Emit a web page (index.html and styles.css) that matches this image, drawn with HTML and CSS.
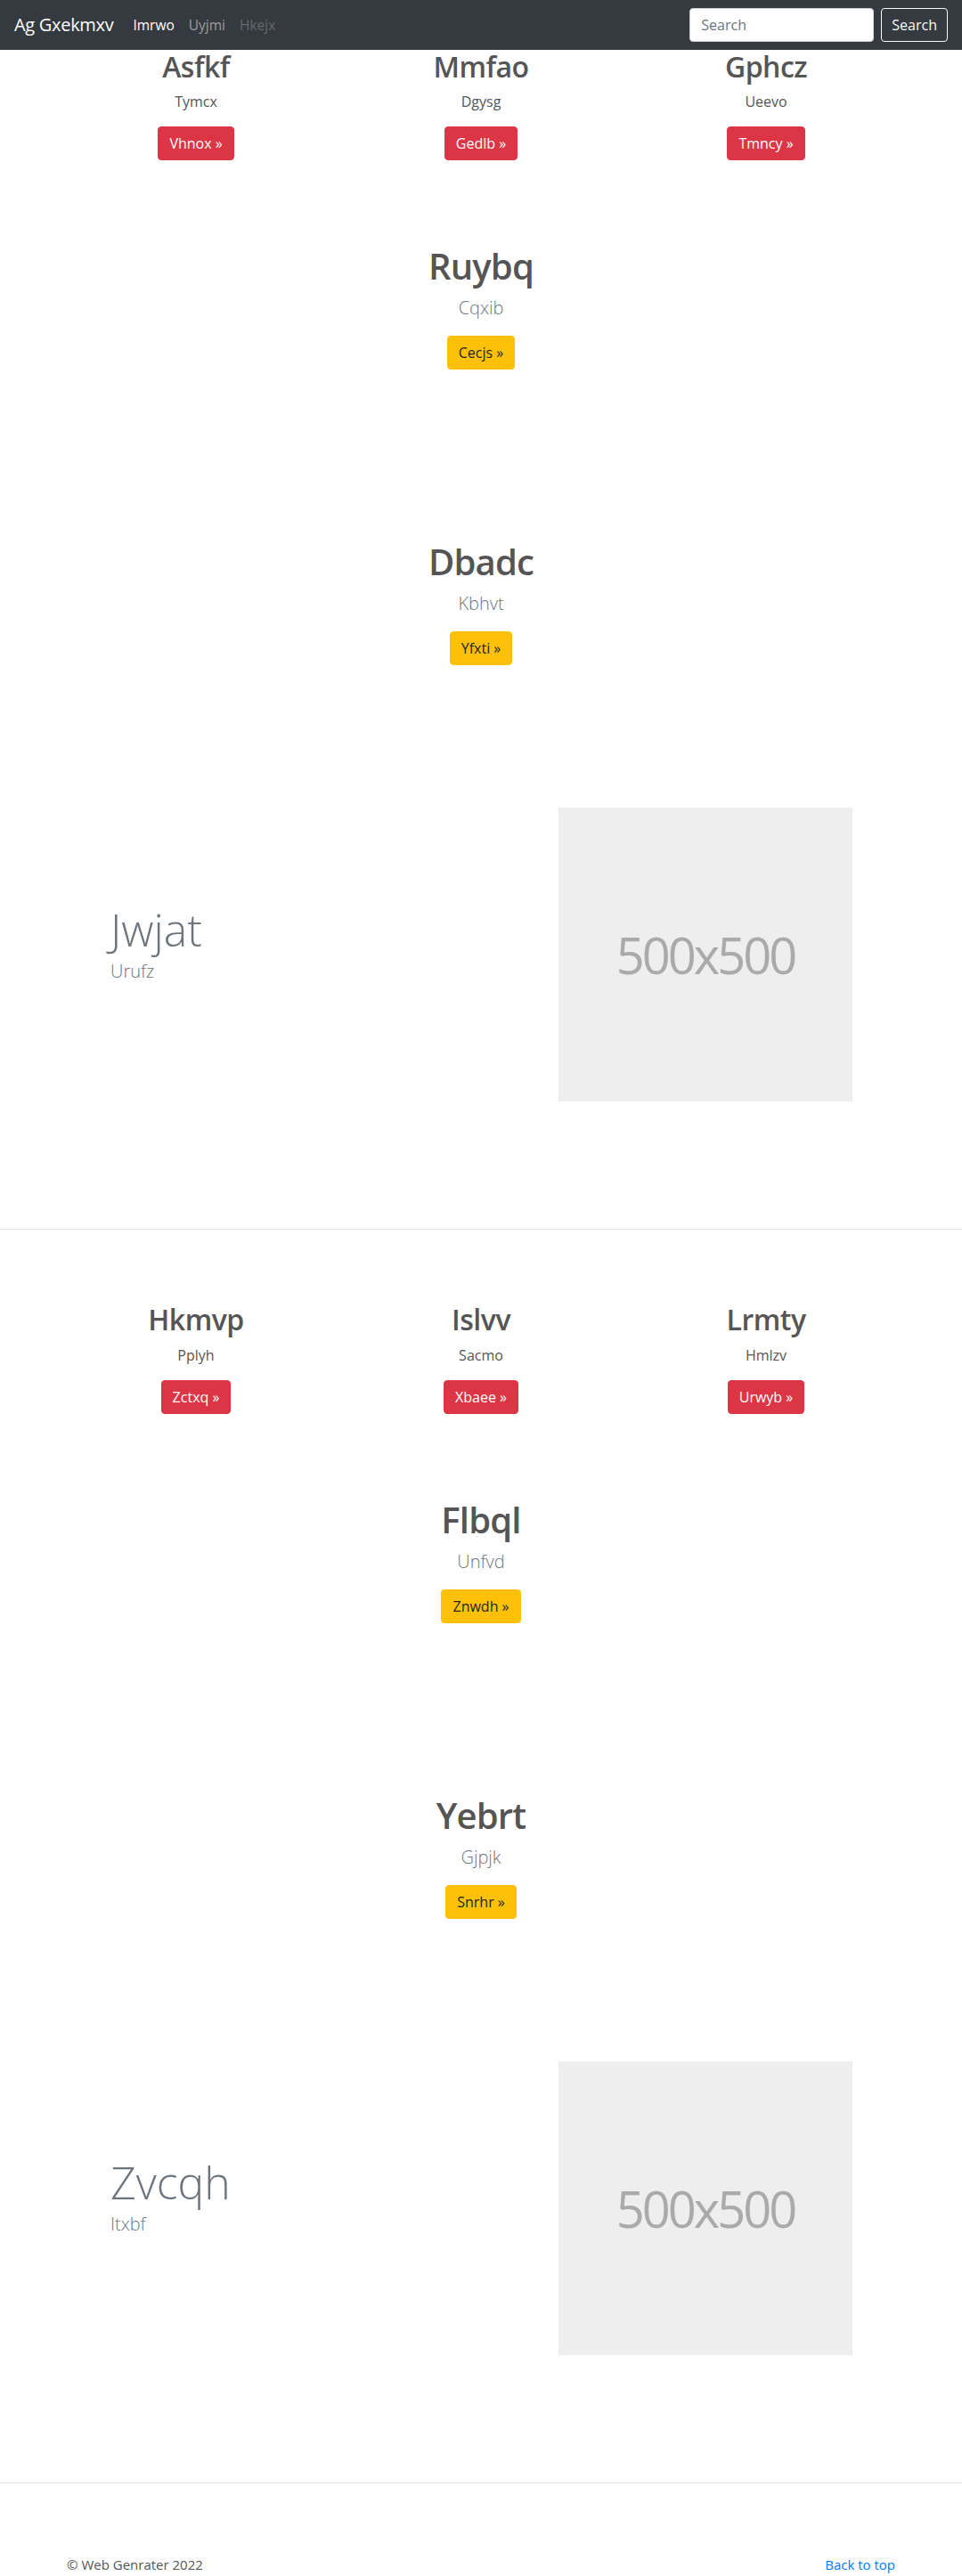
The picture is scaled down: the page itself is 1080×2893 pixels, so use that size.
FILE: index.html
```html
<!DOCTYPE html>
<html lang="en">
<head>
<meta charset="utf-8">
<title>Ag Gxekmxv</title>
<link rel="stylesheet" href="styles.css">
</head>
<body>
<nav class="navbar">
  <a class="brand" href="#">Ag Gxekmxv</a>
  <ul class="nav">
    <li><a class="nav-link nav-link-active" href="#">Imrwo</a></li>
    <li><a class="nav-link" href="#">Uyjmi</a></li>
    <li><a class="nav-link nav-link-disabled" href="#">Hkejx</a></li>
  </ul>
  <form class="search">
    <input class="search-input" type="text" placeholder="Search">
    <button class="search-btn" type="button">Search</button>
  </form>
</nav>

<main>
  <section class="block block-first">
    <div class="trio">
      <div class="trio-col">
        <h2 class="trio-title">Asfkf</h2>
        <p class="trio-sub">Tymcx</p>
        <p class="btn-wrap"><a class="btn btn-danger" href="#">Vhnox &raquo;</a></p>
      </div>
      <div class="trio-col">
        <h2 class="trio-title">Mmfao</h2>
        <p class="trio-sub">Dgysg</p>
        <p class="btn-wrap"><a class="btn btn-danger" href="#">Gedlb &raquo;</a></p>
      </div>
      <div class="trio-col">
        <h2 class="trio-title">Gphcz</h2>
        <p class="trio-sub">Ueevo</p>
        <p class="btn-wrap"><a class="btn btn-danger" href="#">Tmncy &raquo;</a></p>
      </div>
    </div>

    <div class="solo solo-a">
      <h1 class="solo-title">Ruybq</h1>
      <p class="solo-lead">Cqxib</p>
      <p class="btn-wrap"><a class="btn btn-warning" href="#">Cecjs &raquo;</a></p>
    </div>

    <div class="solo solo-b">
      <h1 class="solo-title">Dbadc</h1>
      <p class="solo-lead">Kbhvt</p>
      <p class="btn-wrap"><a class="btn btn-warning" href="#">Yfxti &raquo;</a></p>
    </div>

    <div class="feature">
      <div class="feature-text">
        <h1 class="feature-title">Jwjat</h1>
        <p class="feature-sub">Urufz</p>
      </div>
      <div class="placeholder">500x500</div>
    </div>
  </section>

  <hr class="divider">

  <section class="block">
    <div class="trio">
      <div class="trio-col">
        <h2 class="trio-title">Hkmvp</h2>
        <p class="trio-sub">Pplyh</p>
        <p class="btn-wrap"><a class="btn btn-danger" href="#">Zctxq &raquo;</a></p>
      </div>
      <div class="trio-col">
        <h2 class="trio-title">Islvv</h2>
        <p class="trio-sub">Sacmo</p>
        <p class="btn-wrap"><a class="btn btn-danger" href="#">Xbaee &raquo;</a></p>
      </div>
      <div class="trio-col">
        <h2 class="trio-title">Lrmty</h2>
        <p class="trio-sub">Hmlzv</p>
        <p class="btn-wrap"><a class="btn btn-danger" href="#">Urwyb &raquo;</a></p>
      </div>
    </div>

    <div class="solo solo-a">
      <h1 class="solo-title">Flbql</h1>
      <p class="solo-lead">Unfvd</p>
      <p class="btn-wrap"><a class="btn btn-warning" href="#">Znwdh &raquo;</a></p>
    </div>

    <div class="solo solo-b">
      <h1 class="solo-title">Yebrt</h1>
      <p class="solo-lead">Gjpjk</p>
      <p class="btn-wrap"><a class="btn btn-warning" href="#">Snrhr &raquo;</a></p>
    </div>

    <div class="feature">
      <div class="feature-text">
        <h1 class="feature-title">Zvcqh</h1>
        <p class="feature-sub">Itxbf</p>
      </div>
      <div class="placeholder">500x500</div>
    </div>
  </section>

  <hr class="divider">
</main>

<footer class="footer">
  <p class="footer-copy">&copy; Web Genrater 2022</p>
  <a class="footer-top" href="#">Back to top</a>
</footer>
</body>
</html>
```

FILE: styles.css
```css
* {
  box-sizing: border-box;
}

html, body {
  margin: 0;
  padding: 0;
}

body {
  font-family: "Open Sans", "Noto Sans", "Liberation Sans", sans-serif;
  font-size: 16px;
  line-height: 1.5;
  color: #555;
  background: #fff;
}

a {
  text-decoration: none;
}

/* ---------- navbar ---------- */
.navbar {
  display: flex;
  align-items: center;
  height: 56px;
  padding: 0 16px;
  background: #343a40;
}

.brand {
  font-size: 20px;
  line-height: 30px;
  color: #fff;
  margin-right: 14px;
  letter-spacing: -0.3px;
  white-space: nowrap;
}

.nav {
  display: flex;
  list-style: none;
  margin: 0;
  padding: 0;
}

.nav-link {
  display: block;
  padding: 8px 8px;
  font-size: 15.5px;
  line-height: 24px;
  color: rgba(255, 255, 255, 0.5);
}

.nav-link-active {
  color: #fff;
}

.nav-link-disabled {
  color: rgba(255, 255, 255, 0.25);
}

.search {
  display: flex;
  align-items: center;
  margin-left: auto;
}

.search-input {
  width: 207px;
  height: 38px;
  margin-right: 8px;
  padding: 6px 12px;
  font-family: inherit;
  font-size: 16px;
  color: #495057;
  background: #fff;
  border: 1px solid #ced4da;
  border-radius: 4px;
}

.search-input::placeholder {
  color: #6c757d;
}

.search-btn {
  height: 38px;
  padding: 6px 11px;
  font-family: inherit;
  font-size: 16px;
  line-height: 24px;
  color: #f8f9fa;
  background: transparent;
  border: 1px solid #f8f9fa;
  border-radius: 4px;
}

/* ---------- sections ---------- */
.block {
  padding-top: 82px;
}

.block-first {
  padding-top: 0;
}

.trio {
  display: grid;
  grid-template-columns: repeat(3, 1fr);
  width: 960px;
  margin: 0 auto;
  text-align: center;
}

.trio-col {
  padding: 0 15px;
}

.trio-title {
  margin: 0 0 8px;
  font-size: 32px;
  line-height: 1.2;
  font-weight: 600;
  letter-spacing: -0.5px;
  color: #555;
}

.trio-sub {
  margin: 0 0 16px;
  font-size: 16px;
  line-height: 24px;
  color: #555;
}

.btn-wrap {
  display: flex;
  justify-content: center;
  margin: 0 0 16px;
}

.btn {
  display: inline-block;
  height: 38px;
  padding: 6px 12px;
  font-size: 16px;
  line-height: 24px;
  border: 1px solid transparent;
  border-radius: 4px;
  white-space: nowrap;
}

.btn-danger {
  color: #fff;
  background: #dc3545;
  border-color: #dc3545;
}

.btn-warning {
  color: #212529;
  background: #ffc107;
  border-color: #ffc107;
}

.solo {
  display: flow-root;
  text-align: center;
}

.solo-a {
  margin-top: 79px;
}

.solo-b {
  margin-top: 176px;
}

.solo-title {
  margin: 0 0 8px;
  font-size: 40px;
  line-height: 48px;
  font-weight: 600;
  letter-spacing: -0.8px;
  color: #555;
}

.solo-lead {
  margin: 0 0 16px;
  font-size: 20px;
  line-height: 30px;
  font-weight: 300;
  color: #6c757d;
}

.feature {
  display: flex;
  align-items: center;
  justify-content: space-between;
  margin-top: 144px;
  padding: 0 123px 143px 124px;
}

.feature-text {
  padding-bottom: 25px;
}

.feature-title {
  margin: 0 0 2px;
  font-size: 50px;
  line-height: 60px;
  font-weight: 300;
  color: #6c757d;
}

.feature-sub {
  margin: 0;
  font-size: 20px;
  line-height: 30px;
  font-weight: 300;
  color: #6c757d;
}

.placeholder {
  display: flex;
  align-items: center;
  justify-content: center;
  width: 330px;
  height: 330px;
  background: #eee;
  color: #aaa;
  font-size: 56px;
  letter-spacing: -3px;
}

.divider {
  height: 0;
  margin: 0;
  border: 0;
  border-top: 1px solid rgba(0, 0, 0, 0.1);
}

/* ---------- footer ---------- */
.footer {
  display: flex;
  justify-content: space-between;
  align-items: flex-start;
  width: 960px;
  margin: 0 auto;
  padding: 80px 15px 48px;
  font-size: 15px;
  line-height: 22px;
}

.footer-copy {
  margin: 0;
  color: #555;
}

.footer-top {
  color: #007bff;
}
```
